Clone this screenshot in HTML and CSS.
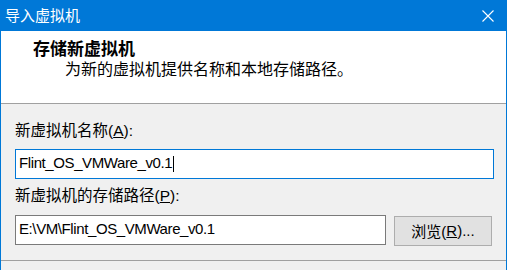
FILE: index.html
```html
<!DOCTYPE html>
<html lang="zh-CN">
<head>
<meta charset="utf-8">
<title>导入虚拟机</title>
<link rel="stylesheet" href="styles.css">
</head>
<body>
<div class="window">
  <div class="titlebar">
    <span class="title">导入虚拟机</span>
    <svg class="close" width="12" height="12" viewBox="0 0 12 12"><path d="M0.5 0.5 L11.5 11.5 M11.5 0.5 L0.5 11.5" stroke="#fff" stroke-width="1.1" fill="none"/></svg>
  </div>
  <div class="header">
    <div class="h-title">存储新虚拟机</div>
    <div class="h-sub">为新的虚拟机提供名称和本地存储路径。</div>
  </div>
  <div class="content">
    <div class="label">新虚拟机名称(<u>A</u>):</div>
    <div class="field focused">Flint_OS_VMWare_v0.1<span class="caret"></span></div>
    <div class="label label2">新虚拟机的存储路径(<u>P</u>):</div>
    <div class="row">
      <div class="field path">E:\VM\Flint_OS_VMWare_v0.1</div>
      <div class="button">浏览(<u>R</u>)...</div>
    </div>
  </div>
  <div class="footer"></div>
</div>
</body>
</html>
```
FILE: styles.css
```css
html, body {
  margin: 0;
  padding: 0;
  background: #ffffff;
}
body {
  font-family: "Liberation Sans", "Noto Sans CJK SC", sans-serif;
  color: #000;
}
.window {
  width: 507px;
  box-sizing: border-box;
  border-left: 1px solid #0078d7;
  border-right: 1px solid #0078d7;
  display: flex;
  flex-direction: column;
}
.titlebar {
  height: 31px;
  background: #0078d7;
  display: flex;
  align-items: center;
  justify-content: space-between;
  padding: 1px 13px 0 4px;
  box-sizing: border-box;
  margin: 0 -1px;
}
.title {
  color: #fff;
  font-size: 15px;
  line-height: 20px;
  padding-left: 1px;
}
.close {
  display: block;
  margin-top: -1px;
}
.header {
  height: 73px;
  box-sizing: border-box;
  background: #fff;
  border-bottom: 1px solid #a0a0a0;
  padding: 8px 0 0 32px;
}
.h-title {
  font-size: 17px;
  font-weight: bold;
  line-height: 22px;
}
.h-sub {
  font-size: 16px;
  line-height: 20px;
  margin: -1px 0 0 32px;
}
.content {
  height: 156px;
  box-sizing: border-box;
  background: #f0f0f0;
  padding: 17px 12px 0 14px;
}
.label {
  font-size: 15.5px;
  line-height: 20px;
  margin-bottom: 8px;
}
.label2 {
  margin-top: 7px;
  margin-bottom: 9px;
}
.field {
  height: 30px;
  box-sizing: border-box;
  background: #fff;
  border: 1px solid #7a7a7a;
  font-size: 15px;
  letter-spacing: -0.4px;
  padding: 0 3px 3px;
  display: flex;
  align-items: center;
  white-space: nowrap;
}
.field.focused {
  border-color: #0078d7;
}
.caret {
  display: inline-block;
  width: 1px;
  height: 16px;
  background: #000;
  margin-left: 1px;
  margin-top: 2px;
}
.row {
  display: flex;
  align-items: flex-start;
  gap: 8px;
}
.path {
  width: 371px;
}
.button {
  width: 98px;
  height: 30px;
  margin-top: 1px;
  box-sizing: border-box;
  background: #e1e1e1;
  border: 1px solid #adadad;
  font-size: 15px;
  display: flex;
  align-items: center;
  justify-content: center;
  padding-bottom: 2px;
}
.footer {
  height: 9px;
  background: #f0f0f0;
  border-top: 1px solid #a0a0a0;
}
```
